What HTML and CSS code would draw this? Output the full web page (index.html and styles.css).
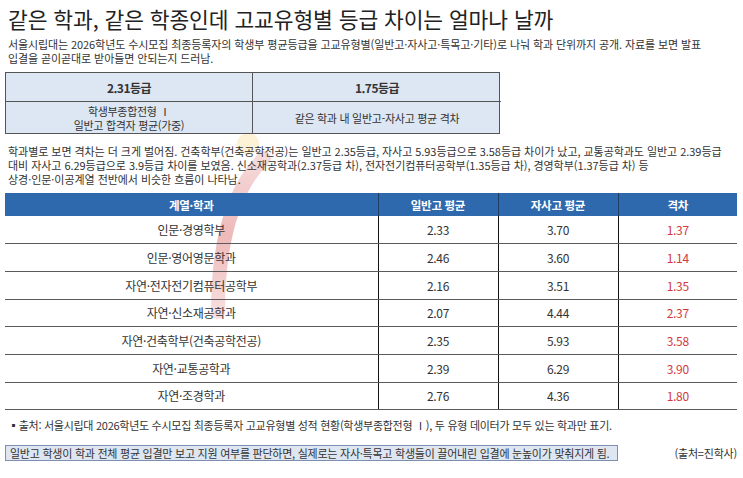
FILE: index.html
```html
<!DOCTYPE html>
<html lang="ko">
<head>
<meta charset="utf-8">
<title>같은 학과, 같은 학종인데 고교유형별 등급 차이는 얼마나 날까</title>
<link rel="stylesheet" href="styles.css">
</head>
<body>
<div class="page">
  <svg class="wm-arc" width="80" height="190" viewBox="0 0 80 190" aria-hidden="true">
    <defs>
      <linearGradient id="arcg" x1="0" y1="0" x2="0" y2="1">
        <stop offset="0" stop-color="#f6dada"/>
        <stop offset="0.5" stop-color="#eeb9b9"/>
        <stop offset="1" stop-color="#f7dede"/>
      </linearGradient>
    </defs>
    <circle cx="44" cy="12" r="11" fill="#fdf1d6"/>
    <path d="M60 26 Q14 72 14 180" fill="none" stroke="url(#arcg)" stroke-width="14" stroke-linecap="round"/>
  </svg>

  <h1 class="title">같은 학과, 같은 학종인데 고교유형별 등급 차이는 얼마나 날까</h1>
  <p class="lead">서울시립대는 2026학년도 수시모집 최종등록자의 학생부 평균등급을 고교유형별(일반고·자사고·특목고·기타)로 나눠 학과 단위까지 공개. 자료를 보면 발표<br>입결을 곧이곧대로 받아들면 안되는지 드러남.</p>

  <div class="summary">
    <div class="sum-cell sum-top">2.31등급</div>
    <div class="sum-cell sum-top">1.75등급</div>
    <div class="sum-cell sum-bot">학생부종합전형 Ⅰ<br>일반고 합격자 평균(가중)</div>
    <div class="sum-cell sum-bot">같은 학과 내 일반고-자사고 평균 격차</div>
  </div>

  <p class="lead second">학과별로 보면 격차는 더 크게 벌어짐. 건축학부(건축공학전공)는 일반고 2.35등급, 자사고 5.93등급으로 3.58등급 차이가 났고, 교통공학과도 일반고 2.39등급<br>대비 자사고 6.29등급으로 3.9등급 차이를 보였음. 신소재공학과(2.37등급 차), 전자전기컴퓨터공학부(1.35등급 차), 경영학부(1.37등급 차) 등<br>상경·인문·이공계열 전반에서 비슷한 흐름이 나타남.</p>

  <table class="data">
    <colgroup>
      <col class="c1"><col class="c2"><col class="c3"><col class="c4">
    </colgroup>
    <thead>
      <tr><th>계열·학과</th><th>일반고 평균</th><th>자사고 평균</th><th>격차</th></tr>
    </thead>
    <tbody>
      <tr><td>인문·경영학부</td><td>2.33</td><td>3.70</td><td class="gap">1.37</td></tr>
      <tr><td>인문·영어영문학과</td><td>2.46</td><td>3.60</td><td class="gap">1.14</td></tr>
      <tr><td>자연·전자전기컴퓨터공학부</td><td>2.16</td><td>3.51</td><td class="gap">1.35</td></tr>
      <tr><td>자연·신소재공학과</td><td>2.07</td><td>4.44</td><td class="gap">2.37</td></tr>
      <tr><td>자연·건축학부(건축공학전공)</td><td>2.35</td><td>5.93</td><td class="gap">3.58</td></tr>
      <tr><td>자연·교통공학과</td><td>2.39</td><td>6.29</td><td class="gap">3.90</td></tr>
      <tr><td>자연·조경학과</td><td>2.76</td><td>4.36</td><td class="gap">1.80</td></tr>
    </tbody>
  </table>

  <p class="note">▪출처: 서울시립대 2026학년도 수시모집 최종등록자 고교유형별 성적 현황(학생부종합전형 Ⅰ), 두 유형 데이터가 모두 있는 학과만 표기.</p>

  <div class="bottom">
    <div class="callout">일반고 학생이 학과 전체 평균 입결만 보고 지원 여부를 판단하면, 실제로는 자사·특목고 학생들이 끌어내린 입결에 눈높이가 맞춰지게 됨.</div>
    <div class="source">(출처=진학사)</div>
  </div>
</div>
</body>
</html>
```

FILE: styles.css
```css
* { box-sizing: border-box; }

html, body {
  margin: 0;
  padding: 0;
  background: #ffffff;
}

body {
  font-family: "Noto Sans CJK KR", "Noto Sans", sans-serif;
  color: #333333;
  width: 743px;
  height: 478px;
  overflow: hidden;
}

.page {
  position: relative;
  padding: 6px 6px 0 5px;
}

.wm-arc {
  position: absolute;
  left: 204px;
  top: 132px;
  z-index: 0;
  pointer-events: none;
}

.title, .lead, .summary, .data, .note, .bottom {
  position: relative;
  z-index: 1;
}

.title {
  margin: 0 0 0 3px;
  font-size: 21.5px;
  line-height: 26px;
  font-weight: 400;
  letter-spacing: -0.1px;
  color: #222222;
  white-space: nowrap;
}

.lead {
  margin: 5px 0 0 3px;
  font-size: 11px;
  line-height: 14px;
  letter-spacing: -0.1px;
  color: #333333;
  white-space: nowrap;
}

.lead.second {
  margin-top: 10px;
  letter-spacing: -0.05px;
}

.summary {
  margin-top: 7px;
  width: 495px;
  display: grid;
  grid-template-columns: 247px 248px;
  grid-template-rows: 29px 31px;
  background: #dde7f3;
  border: 1px solid #555555;
}

.sum-cell {
  display: flex;
  align-items: center;
  justify-content: center;
  text-align: center;
  color: #333333;
}

.sum-cell:nth-child(odd) {
  border-right: 1px solid #555555;
}

.sum-top {
  border-bottom: 1px solid #555555;
  font-size: 12px;
  font-weight: 700;
  letter-spacing: -0.5px;
}

.sum-bot {
  font-size: 11px;
  line-height: 14px;
  letter-spacing: -0.3px;
}

.data {
  margin-top: 7px;
  width: 732px;
  border-collapse: collapse;
  table-layout: fixed;
  font-size: 12px;
  letter-spacing: -0.3px;
}

.c1 { width: 373px; }
.c2 { width: 120px; }
.c3 { width: 120px; }
.c4 { width: 119px; }

.data th {
  height: 23px;
  padding: 0;
  background: #2f69ad;
  color: #ffffff;
  font-weight: 700;
  font-size: 11.5px;
  text-align: center;
  border-left: 1px solid #1e3e66;
}

.data th:first-child { border-left: none; }

.data td {
  height: 27.7px;
  padding: 0;
  text-align: center;
  color: #333333;
  border-bottom: 1.5px solid #5a5a5a;
  border-left: 1px solid #111111;
}

.data td:first-child { border-left: none; }

.data td.gap {
  color: #d23a3e;
}

.note {
  margin: 8px 0 0 3px;
  font-size: 11px;
  line-height: 14px;
  letter-spacing: -0.28px;
  color: #333333;
  white-space: nowrap;
}

.bottom {
  margin-top: 13px;
  display: flex;
  align-items: center;
  justify-content: space-between;
  width: 732px;
}

.callout {
  width: 613px;
  height: 16px;
  line-height: 14px;
  padding-left: 4px;
  background: #dee6f2;
  border: 1px solid #7d8fb0;
  font-size: 11px;
  letter-spacing: -0.25px;
  color: #333333;
  white-space: nowrap;
}

.source {
  font-size: 11px;
  letter-spacing: -0.2px;
  color: #333333;
  line-height: 14px;
}
```
